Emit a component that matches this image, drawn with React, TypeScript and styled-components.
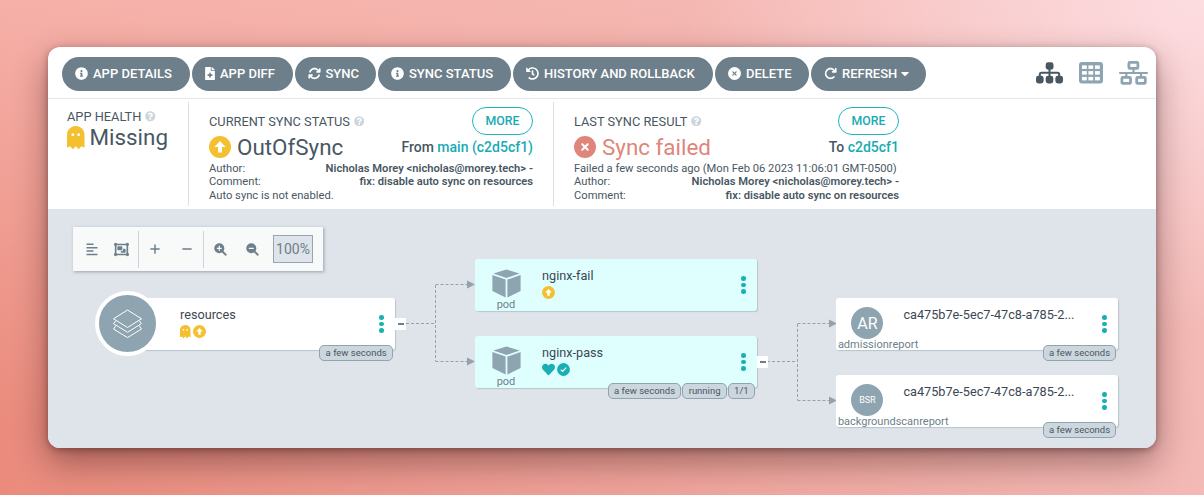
import React from "react";
import styled, { createGlobalStyle } from "styled-components";
import {
  FaCaretDown,
  FaFileMedical,
  FaGhost,
  FaHeart,
  FaHistory,
  FaInfoCircle,
  FaQuestionCircle,
} from "react-icons/fa";
import { FaArrowRotateRight, FaArrowsRotate, FaCircleXmark, FaMinus, FaObjectGroup, FaPlus } from "react-icons/fa6";

const GlobalStyle = createGlobalStyle`
  * { box-sizing: border-box; }
  body {
    margin: 0;
    font-family: Roboto, "Liberation Sans", sans-serif;
    color: #495763;
  }
`;

const Backdrop = styled.div`
  width: 1204px;
  height: 495px;
  overflow: hidden;
  padding: 47px 48px;
  background:
    radial-gradient(ellipse 520px 330px at 100% 0%, #fddde1 0%, rgba(253, 221, 225, 0) 100%),
    linear-gradient(90deg, rgba(244, 190, 187, 0) 0%, rgba(244, 190, 187, 0.9) 100%),
    linear-gradient(180deg, #f6b0a8 0%, #ea8b7d 85%, #ea8b7d 100%);
`;

const Window = styled.main`
  width: 1107.5px;
  height: 401px;
  display: flex;
  flex-direction: column;
  overflow: hidden;
  border-radius: 12px;
  background: #fff;
  box-shadow: 0 14px 34px rgba(45, 15, 15, 0.42), 0 2px 7px rgba(45, 15, 15, 0.38);
`;

const TopBar = styled.header`
  flex: none;
  height: 52px;
  display: flex;
  align-items: flex-start;
  justify-content: space-between;
  padding: 10px 8px 0 14px;
  border-bottom: 1px solid #ececee;
`;

const Actions = styled.div`
  display: flex;
  gap: 2px;
`;

const ActionButton = styled.button<{ $width: number }>`
  width: ${(p) => p.$width}px;
  height: 34px;
  display: flex;
  align-items: center;
  padding: 0 0 1px 13px;
  border: 0;
  border-radius: 17px;
  background: #6d7f8b;
  color: #fff;
  font: 500 13px Roboto, sans-serif;
  white-space: nowrap;

  svg { flex: none; width: 13px; height: 13px; margin-right: 5px; }
  svg.file { width: 10px; }
  svg.caret { width: 10px; margin: 0 0 0 3px; }
`;

const Views = styled.nav`
  display: flex;
  align-items: center;
  height: 32px;
  gap: 15px;
  color: #8fa4b1;
`;

const StatusPanel = styled.section`
  flex: none;
  height: 110px;
  display: flex;
  padding-top: 3px;
  position: relative;
  box-shadow: 0 1px 2px rgba(90, 110, 125, 0.5);
`;

const StatusItem = styled.div<{ $width: number; $last?: boolean }>`
  width: ${(p) => p.$width}px;
  height: 104px;
  padding: 5px 20px 0;
  border-right: ${(p) => (p.$last ? "0" : "1px solid #d9e0e6")};
  &:first-child { padding-left: 19px; }
`;

const Spread = styled.div<{ $height: number }>`
  display: flex;
  align-items: center;
  justify-content: space-between;
  height: ${(p) => p.$height}px;
  white-space: nowrap;
`;

const Caption = styled.div`
  display: flex;
  align-items: center;
  height: 19px;
  font-size: 12.8px;
  white-space: nowrap;
  svg { width: 10.5px; height: 10.5px; margin-left: 4px; color: #ccd6dd; }
`;

const Headline = styled.div<{ $color?: string; $icon: string; $gap: number }>`
  display: flex;
  align-items: center;
  gap: ${(p) => p.$gap}px;
  height: 24px;
  padding-bottom: 2px;
  font-size: 22.4px;
  line-height: 22px;
  white-space: nowrap;
  color: ${(p) => p.$color ?? "#495763"};
  svg { color: ${(p) => p.$icon}; flex: none; }
`;

const MoreButton = styled.button`
  width: 61px;
  height: 28px;
  padding: 0;
  border: 1px solid #1fb5bd;
  border-radius: 14px;
  background: #fff;
  color: #18abb3;
  font: 500 12.3px Roboto, sans-serif;
`;

const Revision = styled.div`
  padding-bottom: 2px;
  font-size: 14px;
  font-weight: 500;
  span { color: #18abb3; }
`;

const Detail = styled.div<{ $height?: number }>`
  display: flex;
  justify-content: space-between;
  align-items: center;
  height: ${(p) => p.$height ?? 13}px;
  font-size: 11.2px;
  white-space: nowrap;
  b { font-weight: 600; }
`;

const Graph = styled.section`
  flex: 1;
  position: relative;
  background: #dee4ea;
`;

const Toolbar = styled.div`
  position: absolute;
  left: 25px;
  top: 18px;
  width: 250px;
  height: 44px;
  display: flex;
  align-items: center;
  background: #f8fafa;
  box-shadow: 1px 1px 3px rgba(90, 110, 125, 0.55);
  color: #6d7f8b;
`;

const ToolGroup = styled.div<{ $width: number; $left: number; $gap: number }>`
  width: ${(p) => p.$width}px;
  height: 37px;
  display: flex;
  align-items: center;
  padding-left: ${(p) => p.$left}px;
  gap: ${(p) => p.$gap}px;
  border-right: 1px solid #cbd3d9;
  &:last-child { border-right: 0; }
  svg { flex: none; }
`;

const Zoom = styled.div`
  flex: none;
  width: 40px;
  height: 28px;
  margin-left: -5px;
  display: grid;
  place-items: center;
  border: 1px solid #96a5b4;
  background: #dee4ea;
  font-size: 14px;
`;

const Edges = styled.svg`
  position: absolute;
  left: 0;
  top: 0;
`;

const NodeCard = styled.article<{ $x: number; $y: number; $synced?: boolean }>`
  position: absolute;
  left: ${(p) => p.$x}px;
  top: ${(p) => p.$y}px;
  width: 282px;
  height: 52px;
  display: flex;
  border-radius: 3px;
  background: ${(p) => (p.$synced ? "#dfffff" : "#fff")};
  box-shadow: 1px 1px 1px rgba(140, 155, 168, 0.45);
`;

const KindColumn = styled.div`
  width: 67px;
  height: 52px;
  display: flex;
  flex-direction: column;
  align-items: center;
  padding: 10px 5px 0 0;
`;

const KindLabel = styled.div<{ $start?: boolean }>`
  align-self: ${(p) => (p.$start ? "flex-start" : "center")};
  padding-left: ${(p) => (p.$start ? 1.5 : 0)}px;
  font-size: 11px;
  line-height: 13px;
  color: #6d7f8b;
  white-space: nowrap;
`;

const KindBadge = styled.div<{ $size: number }>`
  flex: none;
  width: 32px;
  height: 32px;
  margin: -1px 0;
  display: grid;
  place-items: center;
  border-radius: 50%;
  background: #8fa4b1;
  color: #fff;
  font-size: ${(p) => p.$size}px;
`;

const AppBadge = styled.div`
  position: absolute;
  left: -18px;
  top: -7px;
  width: 65px;
  height: 65px;
  display: grid;
  place-items: center;
  border: 4px solid #fff;
  border-radius: 50%;
  background: #8fa4b1;
`;

const NodeBody = styled.div`
  flex: 1;
  padding-top: 9px;
`;

const NodeName = styled.div`
  font-size: 12.7px;
  line-height: 16px;
  color: #3c4754;
  white-space: nowrap;
`;

const NodeIcons = styled.div`
  display: flex;
  align-items: center;
  gap: 2px;
  height: 13px;
  margin-top: 2px;
`;

const Kebab = styled.div`
  width: 5px;
  margin-right: 11px;
  display: flex;
  flex-direction: column;
  justify-content: center;
  gap: 1.8px;
  i { width: 4.6px; height: 4.6px; border-radius: 50%; background: #18b0b5; }
`;

const Tags = styled.div`
  position: absolute;
  right: 2px;
  bottom: -11px;
  display: flex;
  gap: 1px;
`;

const Tag = styled.span`
  height: 16px;
  padding: 0 5.3px;
  border: 1px solid #8fa4b1;
  border-radius: 5px;
  background: #ccd6dd;
  color: #495763;
  font-size: 9.5px;
  line-height: 14px;
  white-space: nowrap;
`;

const Collapse = styled.div`
  position: absolute;
  right: -11px;
  top: 20px;
  width: 11px;
  height: 12px;
  display: grid;
  place-items: center;
  background: #fff;
  i { width: 6px; height: 1.5px; background: #6d7f8b; }
`;

const GOLD = "#f4c030";
const TEAL = "#18b0b5";

const SitemapIcon = () => (
  <svg width="27" height="22" viewBox="0 0 27 22" fill="#495763" style={{ marginRight: 1 }}>
    <rect x="9.7" y="0.3" width="7.8" height="7.4" rx="2.4" />
    <rect x="0" y="13.8" width="7.6" height="7.6" rx="2.4" />
    <rect x="9.7" y="13.8" width="7.6" height="7.6" rx="2.4" />
    <rect x="19.4" y="13.8" width="7.6" height="7.6" rx="2.4" />
    <path d="M13.5 7v7M3.8 14.2V12.4Q3.8 10.8 5.4 10.8H21.6Q23.2 10.8 23.2 12.4V14.2" fill="none" stroke="#495763" strokeWidth="2" />
  </svg>
);

const GridIcon = () => (
  <svg width="24" height="22" viewBox="0 0 24 22" style={{ marginRight: 1 }}>
    <rect width="24" height="21.6" rx="3" fill="currentColor" />
    <g fill="#fff">
      {[3, 9.4, 16].map((x) => [3.4, 9.1, 14.9].map((y) => (
        <rect key={`${x}-${y}`} x={x} y={y} width="4.8" height="3.5" />
      )))}
    </g>
  </svg>
);

const NetworkIcon = () => (
  <svg width="29" height="24" viewBox="0 0 29 24" fill="none" stroke="currentColor" strokeWidth="2.8">
    <rect x="9.9" y="1.4" width="9" height="6" rx="1" />
    <rect x="2.9" y="16.4" width="8.6" height="6" rx="1" />
    <rect x="17.7" y="16.4" width="8.6" height="6" rx="1" />
    <path d="M0.2 12h28.6M14.5 7.5V12M7.3 12v4.5M22 12v4.5" strokeWidth="2.2" />
  </svg>
);

const AlignIcon = () => (
  <svg width="12" height="13" viewBox="0 0 12 13" stroke="currentColor" strokeWidth="1.5">
    <path d="M0.5 1.3H7.5M0.5 4.7H11.5M0.5 8.1H7.5M0.5 11.5H11.5" />
  </svg>
);

const MagnifierIcon = ({ plus }: { plus?: boolean }) => (
  <svg width="13" height="13" viewBox="0 0 13 13" fill="none">
    <circle cx="5.3" cy="5.3" r="5" fill="currentColor" />
    <path d="M8.5 8.5 12.3 12.3" stroke="currentColor" strokeWidth="1.9" />
    <path d={plus ? "M2.8 5.3H7.8M5.3 2.8V7.8" : "M2.8 5.3H7.8"} stroke="#f8fafa" strokeWidth="1.3" />
  </svg>
);

const ArrowUpBadge = ({ size }: { size: number }) => (
  <svg width={size} height={size} viewBox="0 0 22 22">
    <circle cx="11" cy="11" r="11" fill={GOLD} />
    <path d="M11 5 16.6 11H13V16.6H9V11H5.4Z" fill="#fff" />
  </svg>
);

const CheckBadge = () => (
  <svg width="13" height="13" viewBox="0 0 13 13">
    <circle cx="6.5" cy="6.5" r="6.4" fill={TEAL} />
    <path d="M3.8 6.8 5.6 8.5 9.2 4.7" fill="none" stroke="#fff" strokeWidth="1.2" />
  </svg>
);

const CubeIcon = () => (
  <svg width="29" height="29" viewBox="0 0 29 29" fill="#8fa4b1" style={{ flex: "none" }}>
    <path d="M14.5 0.6 27.6 4.4 14.5 9 1.4 4.4Z" />
    <path d="M0.4 6 13.6 10.6V28.6L0.4 22Z" />
    <path d="M28.6 6 15.4 10.6V28.6L28.6 22Z" />
  </svg>
);

const LayersIcon = () => (
  <svg width="31" height="30" viewBox="0 0 31 30" fill="none" stroke="#fff" strokeWidth="1" strokeLinejoin="round">
    <path d="M15.5 1 29.5 9.8 15.5 18.5 1.5 9.8Z" />
    <path d="M4 11.5 1.5 14.6 15.5 23.3 29.5 14.6 27 11.5" />
    <path d="M4 16.5 1.5 20 15.5 28.6 29.5 20 27 16.5" />
  </svg>
);

const GraphNode = ({
  x, y, name, synced, kind, tags = [], icons, collapsible,
}: {
  x: number; y: number; name: string; synced?: boolean; kind: React.ReactNode;
  tags?: string[]; icons?: React.ReactNode; collapsible?: boolean;
}) => (
  <NodeCard $x={x} $y={y} $synced={synced}>
    <KindColumn>{kind}</KindColumn>
    <NodeBody>
      <NodeName>{name}</NodeName>
      <NodeIcons>{icons}</NodeIcons>
    </NodeBody>
    <Kebab><i /><i /><i /></Kebab>
    {tags.length > 0 && <Tags>{tags.map((t) => <Tag key={t}>{t}</Tag>)}</Tags>}
    {collapsible && <Collapse><i /></Collapse>}
  </NodeCard>
);

export default function App() {
  return (
    <>
      <GlobalStyle />
      <Backdrop>
        <Window>
          <TopBar>
            <Actions>
              <ActionButton $width={128}><FaInfoCircle />APP DETAILS</ActionButton>
              <ActionButton $width={100.5}><FaFileMedical className="file" />APP DIFF</ActionButton>
              <ActionButton $width={81.5}><FaArrowsRotate />SYNC</ActionButton>
              <ActionButton $width={133}><FaInfoCircle />SYNC STATUS</ActionButton>
              <ActionButton $width={200}><FaHistory />HISTORY AND ROLLBACK</ActionButton>
              <ActionButton $width={94}><FaCircleXmark />DELETE</ActionButton>
              <ActionButton $width={115}><FaArrowRotateRight />REFRESH<FaCaretDown className="caret" /></ActionButton>
            </Actions>
            <Views>
              <SitemapIcon />
              <GridIcon />
              <NetworkIcon />
            </Views>
          </TopBar>

          <StatusPanel>
            <StatusItem $width={141}>
              <Caption>APP HEALTH <FaQuestionCircle /></Caption>
              <Headline $icon={GOLD} $gap={5}><FaGhost size={23} style={{ width: 17.5 }} preserveAspectRatio="none" />Missing</Headline>
            </StatusItem>
            <StatusItem $width={365}>
              <Spread $height={28}>
                <Caption>CURRENT SYNC STATUS <FaQuestionCircle /></Caption>
                <MoreButton>MORE</MoreButton>
              </Spread>
              <Spread $height={26}>
                <Headline $icon={GOLD} $gap={6}><ArrowUpBadge size={22} />OutOfSync</Headline>
                <Revision>From <span>main (c2d5cf1)</span></Revision>
              </Spread>
              <Detail $height={14}>Author:<b>Nicholas Morey &lt;nicholas@morey.tech&gt; -</b></Detail>
              <Detail>Comment:<b>fix: disable auto sync on resources</b></Detail>
              <Detail $height={14}>Auto sync is not enabled.</Detail>
            </StatusItem>
            <StatusItem $width={365} $last>
              <Spread $height={28}>
                <Caption>LAST SYNC RESULT <FaQuestionCircle /></Caption>
                <MoreButton>MORE</MoreButton>
              </Spread>
              <Spread $height={26}>
                <Headline $color="#e0857a" $icon="#e0857a" $gap={6}><FaCircleXmark size={22} />Sync failed</Headline>
                <Revision>To <span>c2d5cf1</span></Revision>
              </Spread>
              <Detail $height={14}>Failed a few seconds ago (Mon Feb 06 2023 11:06:01 GMT-0500)</Detail>
              <Detail>Author:<b>Nicholas Morey &lt;nicholas@morey.tech&gt; -</b></Detail>
              <Detail $height={14}>Comment:<b>fix: disable auto sync on resources</b></Detail>
            </StatusItem>
          </StatusPanel>

          <Graph>
            <Edges width="1107" height="239" fill="none" stroke="#95a1ab" strokeWidth="1" strokeDasharray="3 2">
              <path d="M358 114.5H387.5M387.5 76V152M387.5 75.5H420M387.5 152.5H420" />
              <path d="M719 152.5H749.5M749.5 115V191M749.5 114.5H782M749.5 191.5H782" />
              <g fill="#95a1ab" stroke="none">
                <path d="M419 71.5 427 75.5 419 79.5ZM419 148.5 427 152.5 419 156.5Z" />
                <path d="M781 110.5 789 114.5 781 118.5ZM781 187.5 789 191.5 781 195.5Z" />
              </g>
            </Edges>
            <Toolbar>
              <ToolGroup $width={66} $left={12.5} $gap={16}><AlignIcon /><FaObjectGroup size={15} /></ToolGroup>
              <ToolGroup $width={65} $left={10} $gap={20}><FaPlus size={12} /><FaMinus size={12} /></ToolGroup>
              <ToolGroup $width={119} $left={10} $gap={19}>
                <MagnifierIcon plus /><MagnifierIcon /><Zoom>100%</Zoom>
              </ToolGroup>
            </Toolbar>
            <GraphNode
              x={65} y={89} name="resources" collapsible tags={["a few seconds"]}
              kind={<AppBadge><LayersIcon /></AppBadge>}
              icons={<><FaGhost color={GOLD} size={13} style={{ width: 10.5 }} preserveAspectRatio="none" /><ArrowUpBadge size={13} /></>}
            />
            <GraphNode
              x={427} y={50} name="nginx-fail" synced
              kind={<><CubeIcon /><KindLabel>pod</KindLabel></>}
              icons={<ArrowUpBadge size={13} />}
            />
            <GraphNode
              x={427} y={127} name="nginx-pass" synced collapsible
              tags={["a few seconds", "running", "1/1"]}
              kind={<><CubeIcon /><KindLabel>pod</KindLabel></>}
              icons={<><FaHeart color={TEAL} size={13} /><CheckBadge /></>}
            />
            <GraphNode
              x={788.4} y={89} name="ca475b7e-5ec7-47c8-a785-2..." tags={["a few seconds"]}
              kind={<><KindBadge $size={16}>AR</KindBadge><KindLabel $start>admissionreport</KindLabel></>}
            />
            <GraphNode
              x={788.4} y={166} name="ca475b7e-5ec7-47c8-a785-2..." tags={["a few seconds"]}
              kind={<><KindBadge $size={9}>BSR</KindBadge><KindLabel $start>backgroundscanreport</KindLabel></>}
            />
          </Graph>
        </Window>
      </Backdrop>
    </>
  );
}
